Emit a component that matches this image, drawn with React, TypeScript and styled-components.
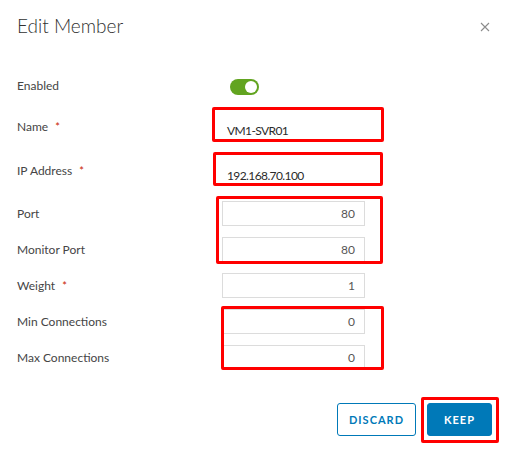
import React from "react";
import styled, { createGlobalStyle } from "styled-components";

interface FieldProps {
  label: string;
  required?: boolean;
  height: number;
  shift?: number;
  children: React.ReactNode;
}

interface MarkProps {
  left: number;
  top: number;
  width: number;
  height: number;
}

const marks: MarkProps[] = [
  { left: 212, top: 107, width: 172, height: 35 },
  { left: 213, top: 152, width: 170, height: 34 },
  { left: 216, top: 196, width: 167, height: 68 },
  { left: 221, top: 306, width: 163, height: 64 },
  { left: 421, top: 397, width: 78, height: 46 },
];

const Field = ({ label, required, height, shift = 0, children }: FieldProps) => (
  <Row height={height}>
    <Label shift={shift}>
      {label}
      {required && <Star>*</Star>}
    </Label>
    <Control>{children}</Control>
  </Row>
);

const App = () => {
  return (
    <>
      <GlobalStyle />
      <Dialog>
        <Header>
          <Title>Edit Member</Title>
          <Close aria-label="close">
            <svg width="10" height="10" viewBox="0 0 10 10">
              <path d="M1 1 L9 9 M9 1 L1 9" stroke="#8c8c8c" strokeWidth="1.1" />
            </svg>
          </Close>
        </Header>
        <Form>
          <Field label="Enabled" height={38} shift={-4}>
            <Toggle />
          </Field>
          <Field label="Name" required height={44} shift={-3}>
            <PlainValue>VM1-SVR01</PlainValue>
          </Field>
          <Field label="IP Address" required height={45} shift={-4}>
            <PlainValue>192.168.70.100</PlainValue>
          </Field>
          <Field label="Port" height={36}>
            <NumberInput>80</NumberInput>
          </Field>
          <Field label="Monitor Port" height={36}>
            <NumberInput>80</NumberInput>
          </Field>
          <Field label="Weight" required height={36}>
            <NumberInput>1</NumberInput>
          </Field>
          <Field label="Min Connections" height={36}>
            <NumberInput>0</NumberInput>
          </Field>
          <Field label="Max Connections" height={36}>
            <NumberInput>0</NumberInput>
          </Field>
        </Form>
        <Footer>
          <OutlineButton>DISCARD</OutlineButton>
          <PrimaryButton>KEEP</PrimaryButton>
        </Footer>
        {marks.map((m, i) => (
          <Mark
            key={i}
            style={{ left: m.left, top: m.top, width: m.width, height: m.height }}
          />
        ))}
      </Dialog>
    </>
  );
};

export default App;

const GlobalStyle = createGlobalStyle`
  body {
    margin: 0;
    background: #ffffff;
    font-family: Lato, "Open Sans", sans-serif;
  }
`;

const Dialog = styled.div`
  position: relative;
  width: 510px;
  height: 452px;
  box-sizing: border-box;
  padding: 0 0 0 17px;
  background: #ffffff;
`;

const Header = styled.div`
  height: 68px;
  display: flex;
  align-items: flex-start;
  justify-content: space-between;
  padding-top: 14px;
  box-sizing: border-box;
`;

const Title = styled.h1`
  margin: 0;
  font-size: 19px;
  font-weight: 300;
  line-height: 24px;
  color: #313131;
`;

const Close = styled.div`
  width: 10px;
  height: 10px;
  margin: 8px 20px 0 0;
  display: flex;
`;

const Form = styled.div`
  display: flex;
  flex-direction: column;
`;

const Row = styled.div<{ height: number }>`
  height: ${({ height }) => height}px;
  display: grid;
  grid-template-columns: 205px 143px;
  align-items: center;
`;

const Label = styled.div<{ shift: number }>`
  font-size: 12px;
  color: #454545;
  margin-top: ${({ shift }) => shift}px;
`;

const Star = styled.span`
  color: #c92100;
  margin-left: 7px;
  font-size: 11px;
`;

const Control = styled.div`
  display: flex;
  align-items: center;
`;

const Toggle = styled.div`
  position: relative;
  margin-left: 8px;
  width: 29px;
  height: 16px;
  border-radius: 8px;
  background: #62a420;

  &::after {
    content: "";
    position: absolute;
    top: 2px;
    right: 2px;
    width: 12px;
    height: 12px;
    border-radius: 50%;
    background: #ffffff;
  }
`;

const PlainValue = styled.div`
  padding-left: 5px;
  margin-top: 5px;
  font-size: 12px;
  letter-spacing: -0.6px;
  color: #2b2b2b;
`;

const NumberInput = styled.div`
  width: 143px;
  height: 25px;
  box-sizing: border-box;
  border: 1px solid #dcdcdc;
  padding-right: 9px;
  display: flex;
  align-items: center;
  justify-content: flex-end;
  font-size: 12px;
  color: #565656;
`;

const Footer = styled.div`
  display: flex;
  justify-content: flex-end;
  gap: 11px;
  padding: 28px 18px 0 0;
`;

const ButtonBase = styled.button`
  height: 33px;
  box-sizing: border-box;
  border-radius: 3px;
  font-family: Lato, "Open Sans", sans-serif;
  font-size: 11px;
  font-weight: 700;
  letter-spacing: 1px;
  border: 1px solid #0079b8;
`;

const OutlineButton = styled(ButtonBase)`
  width: 79px;
  background: #ffffff;
  color: #0079b8;
`;

const PrimaryButton = styled(ButtonBase)`
  width: 65px;
  background: #0079b8;
  color: #ffffff;
`;

const Mark = styled.div`
  position: absolute;
  box-sizing: border-box;
  border: 3px solid #ff0000;
  border-radius: 2px;
  pointer-events: none;
`;
